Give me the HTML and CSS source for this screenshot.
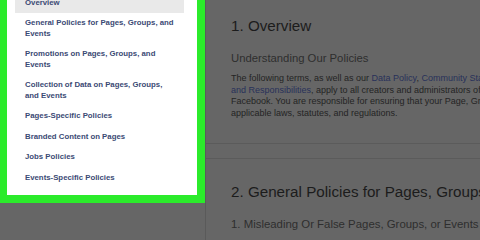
FILE: index.html
```html
<!DOCTYPE html>
<html lang="en">
<head>
<meta charset="utf-8">
<title>Page Policies</title>
<link rel="stylesheet" href="styles.css">
</head>
<body>
<div class="page">
  <aside class="sidebar">
    <nav class="panel">
      <ul class="toc">
        <li class="toc-item active">Overview</li>
        <li class="toc-item">General Policies for Pages, Groups, and<br>Events</li>
        <li class="toc-item">Promotions on Pages, Groups, and<br>Events</li>
        <li class="toc-item">Collection of Data on Pages, Groups,<br>and Events</li>
        <li class="toc-item">Pages-Specific Policies</li>
        <li class="toc-item">Branded Content on Pages</li>
        <li class="toc-item">Jobs Policies</li>
        <li class="toc-item">Events-Specific Policies</li>
      </ul>
    </nav>
  </aside>
  <main class="content">
    <section class="section">
      <h1 class="section-title">1. Overview</h1>
      <h2 class="sub-title">Understanding Our Policies</h2>
      <p class="body-text">The following terms, as well as our <a class="link">Data Policy</a>, <a class="link">Community Standards</a> and <a class="link">Statement of Rights</a><br><a class="link">and Responsibilities</a>, apply to all creators and administrators of Pages, Groups, and Events on<br>Facebook. You are responsible for ensuring that your Page, Group, or Event complies with all<br>applicable laws, statutes, and regulations.</p>
    </section>
    <div class="divider"></div>
    <section class="section second">
      <h1 class="section-title">2. General Policies for Pages, Groups, and Events</h1>
      <h3 class="item-title">1. Misleading Or False Pages, Groups, or Events</h3>
    </section>
  </main>
</div>
</body>
</html>
```
FILE: styles.css
```css
* { box-sizing: border-box; }
html, body {
  margin: 0;
  padding: 0;
}
body {
  width: 480px;
  height: 240px;
  overflow: hidden;
  background: #666666;
  font-family: "Liberation Sans", Arial, sans-serif;
}
.page {
  display: flex;
  height: 240px;
}
.sidebar {
  flex: 0 0 197px;
  border-right: 1px solid #5a5a5a;
}
.panel {
  position: relative;
  z-index: 1;
  width: 205px;
  background: #ffffff;
  border-left: 7px solid #2beb2b;
  border-right: 8px solid #2beb2b;
  border-bottom: 8px solid #2beb2b;
  padding: 0 13px 7px 8px;
}
.toc {
  list-style: none;
  margin: -7.5px 0 0 0;
  padding: 0;
}
.toc-item {
  padding: 5px 0 5px 10px;
  font-size: 7.8px;
  line-height: 10.5px;
  font-weight: bold;
  color: #3b4a74;
  white-space: nowrap;
}
.toc-item.active {
  background: #e9e9e9;
}
.content {
  flex: 1 1 auto;
  min-width: 0;
  overflow: hidden;
}
.section {
  padding-left: 25px;
  white-space: nowrap;
}
.section-title {
  margin: 16.7px 0 0 0;
  font-size: 15.2px;
  line-height: 18px;
  font-weight: normal;
  color: #1c1c1c;
}
.sub-title {
  margin: 16px 0 0 0;
  font-size: 11.3px;
  line-height: 14px;
  font-weight: normal;
  color: #2e2e2e;
}
.body-text {
  margin: 8.5px 0 0 0;
  font-size: 9px;
  line-height: 11.5px;
  color: #242424;
}
.link {
  color: #28315a;
}
.divider {
  margin-top: 24px;
  height: 16px;
  border-top: 1px solid #5b5b5b;
  border-bottom: 1px solid #5b5b5b;
}
.second .section-title {
  margin-top: 24px;
}
.item-title {
  margin: 15.6px 0 0 0;
  font-size: 11.4px;
  line-height: 14px;
  font-weight: normal;
  color: #2e2e2e;
}
```
